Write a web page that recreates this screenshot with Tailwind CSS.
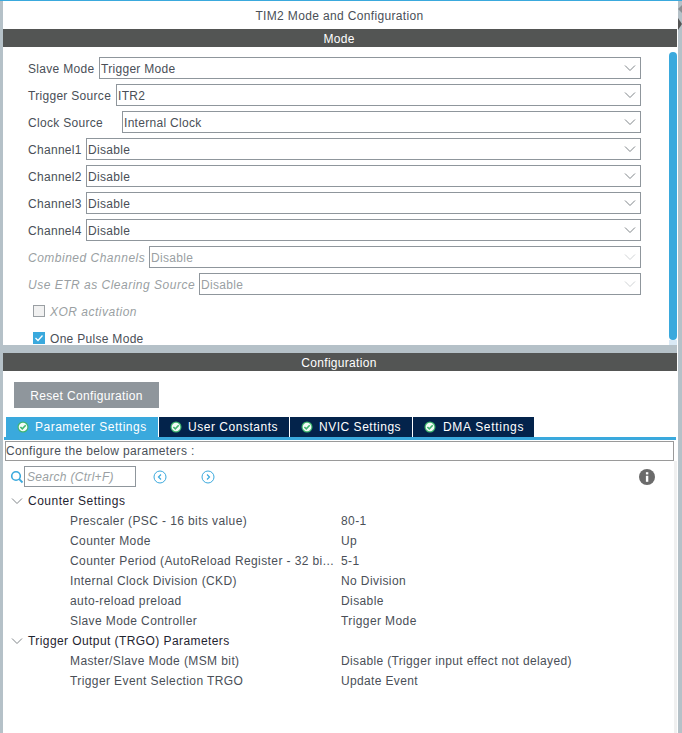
<!DOCTYPE html>
<html lang="en">
<head>
<meta charset="UTF-8">
<title>TIM2 Mode and Configuration</title>
<script src="https://cdn.jsdelivr.net/npm/@tailwindcss/browser@4"></script>
</head>
<body class="bg-white font-['Liberation_Sans',Arial,sans-serif] text-[12px] tracking-[0.3px] text-[#4a4f57] overflow-hidden">
<svg class="hidden">
  <symbol id="chev" viewBox="0 0 12 8"><path d="M1 1.5 6 6.5 11 1.5" fill="none" stroke="currentColor" stroke-width="1"/></symbol>
  <symbol id="ok" viewBox="0 0 12 12"><circle cx="6" cy="6" r="5.5" fill="#3fb56f"/><circle cx="6" cy="6" r="4.3" fill="#f2fbf6"/><path d="M3.4 6 5.3 7.9 8.7 4.3" fill="none" stroke="#3fb56f" stroke-width="1.6"/></symbol>
</svg>
<div class="h-[733px] w-[682px] flex border-t border-[#3aa9dd] pl-[3px] bg-[#b5c1c8]">

  <!-- main column -->
  <div class="w-[674px] flex flex-col">
    <div class="h-[28px] shrink-0 bg-white flex items-center justify-center pt-[2px] pr-[1px] tracking-[0.35px]">TIM2 Mode and Configuration</div>
    <div class="h-[18px] shrink-0 bg-[#535554] text-white flex items-center justify-center pt-[2px] pr-[2px]">Mode</div>

    <!-- Mode panel -->
    <div class="h-[298px] shrink-0 bg-white flex overflow-hidden">
      <div class="flex-1 pl-[25px] pt-[10px] flex flex-col gap-[5px]">
        <div class="flex items-center h-[22px] shrink-0">
          <span class="w-[71px] shrink-0 pt-[2px]">Slave Mode</span>
          <div class="h-[22px] w-[542px] border border-[#8f969c] flex items-center justify-between pl-[1px] pr-[3px]"><span class="pt-[2px]">Trigger Mode</span><svg class="w-[12px] h-[8px] mr-[1px] text-[#7f8589]"><use href="#chev"/></svg></div>
        </div>
        <div class="flex items-center h-[22px] shrink-0">
          <span class="w-[88px] shrink-0 pt-[2px]">Trigger Source</span>
          <div class="h-[22px] w-[525px] border border-[#8f969c] flex items-center justify-between pl-[1px] pr-[3px]"><span class="pt-[2px]">ITR2</span><svg class="w-[12px] h-[8px] mr-[1px] text-[#7f8589]"><use href="#chev"/></svg></div>
        </div>
        <div class="flex items-center h-[22px] shrink-0">
          <span class="w-[94px] shrink-0 pt-[2px]">Clock Source</span>
          <div class="h-[22px] w-[519px] border border-[#8f969c] flex items-center justify-between pl-[1px] pr-[3px]"><span class="pt-[2px]">Internal Clock</span><svg class="w-[12px] h-[8px] mr-[1px] text-[#7f8589]"><use href="#chev"/></svg></div>
        </div>
        <div class="flex items-center h-[22px] shrink-0">
          <span class="w-[58px] shrink-0 pt-[2px]">Channel1</span>
          <div class="h-[22px] w-[555px] border border-[#8f969c] flex items-center justify-between pl-[1px] pr-[3px]"><span class="pt-[2px]">Disable</span><svg class="w-[12px] h-[8px] mr-[1px] text-[#7f8589]"><use href="#chev"/></svg></div>
        </div>
        <div class="flex items-center h-[22px] shrink-0">
          <span class="w-[58px] shrink-0 pt-[2px]">Channel2</span>
          <div class="h-[22px] w-[555px] border border-[#8f969c] flex items-center justify-between pl-[1px] pr-[3px]"><span class="pt-[2px]">Disable</span><svg class="w-[12px] h-[8px] mr-[1px] text-[#7f8589]"><use href="#chev"/></svg></div>
        </div>
        <div class="flex items-center h-[22px] shrink-0">
          <span class="w-[58px] shrink-0 pt-[2px]">Channel3</span>
          <div class="h-[22px] w-[555px] border border-[#8f969c] flex items-center justify-between pl-[1px] pr-[3px]"><span class="pt-[2px]">Disable</span><svg class="w-[12px] h-[8px] mr-[1px] text-[#7f8589]"><use href="#chev"/></svg></div>
        </div>
        <div class="flex items-center h-[22px] shrink-0">
          <span class="w-[58px] shrink-0 pt-[2px]">Channel4</span>
          <div class="h-[22px] w-[555px] border border-[#8f969c] flex items-center justify-between pl-[1px] pr-[3px]"><span class="pt-[2px]">Disable</span><svg class="w-[12px] h-[8px] mr-[1px] text-[#7f8589]"><use href="#chev"/></svg></div>
        </div>
        <div class="flex items-center h-[22px] shrink-0 text-[#9a9fa3]">
          <span class="w-[121px] shrink-0 italic pt-[2px] tracking-[0.5px]">Combined Channels</span>
          <div class="h-[22px] w-[492px] border border-[#8f969c] flex items-center justify-between pl-[1px] pr-[3px]"><span class="pt-[2px]">Disable</span><svg class="w-[12px] h-[8px] mr-[1px] text-[#d0d3d5]"><use href="#chev"/></svg></div>
        </div>
        <div class="flex items-center h-[22px] shrink-0 text-[#9a9fa3]">
          <span class="w-[171px] shrink-0 italic pt-[2px] tracking-[0.5px]">Use ETR as Clearing Source</span>
          <div class="h-[22px] w-[442px] border border-[#8f969c] flex items-center justify-between pl-[1px] pr-[3px]"><span class="pt-[2px]">Disable</span><svg class="w-[12px] h-[8px] mr-[1px] text-[#d0d3d5]"><use href="#chev"/></svg></div>
        </div>
        <div class="flex items-center h-[22px] shrink-0 pl-[5px] gap-[5px] text-[#9a9fa3] italic tracking-[0.5px]">
          <span class="w-[12px] h-[12px] border border-[#9a9fa3] bg-[#f1f1f1]"></span><span class="pt-[2px]">XOR activation</span>
        </div>
        <div class="flex items-center h-[22px] shrink-0 pl-[5px] gap-[5px]">
          <span class="w-[12px] h-[12px] bg-[#3aa9dd] flex items-center justify-center"><svg class="w-[10px] h-[10px]" viewBox="0 0 10 10"><path d="M1.5 5 4 7.5 8.5 2.5" fill="none" stroke="white" stroke-width="1.3"/></svg></span><span class="pt-[2px] tracking-[0.3px]">One Pulse Mode</span>
        </div>
      </div>
      <div class="w-[8px] pt-[5px] bg-white flex flex-col">
        <div class="w-[8px] h-[288px] shrink-0 bg-[#3aa9dd] rounded-[4px]"></div>
        <div class="flex-1 bg-[#d9e9f5]"></div>
      </div>
    </div>

    <div class="h-[8px] shrink-0"></div>
    <div class="h-[18px] shrink-0 bg-[#535554] text-white flex items-center justify-center pt-[2px] pr-[2px]">Configuration</div>

    <!-- Configuration panel -->
    <div class="flex-1 bg-white flex flex-col pt-[11px]">
      <button class="ml-[11px] w-[145px] h-[26px] bg-[#8f969c] text-white tracking-[0.35px] pt-[1px]">Reset Configuration</button>

      <div class="mt-[9px] ml-[3px] flex gap-[1px] h-[20px] shrink-0 text-white">
        <div class="w-[152px] bg-[#3aa9dd] flex items-center pl-[11px] gap-[6px] tracking-[0.5px]"><svg class="w-[12px] h-[12px]"><use href="#ok"/></svg>Parameter Settings</div>
        <div class="w-[130px] bg-[#03234b] flex items-center pl-[11px] gap-[6px] tracking-[0.53px]"><svg class="w-[12px] h-[12px]"><use href="#ok"/></svg>User Constants</div>
        <div class="w-[122px] bg-[#03234b] flex items-center pl-[11px] gap-[6px] tracking-[0.52px]"><svg class="w-[12px] h-[12px]"><use href="#ok"/></svg>NVIC Settings</div>
        <div class="w-[121px] bg-[#03234b] flex items-center pl-[11px] gap-[7px] tracking-[0.7px]"><svg class="w-[12px] h-[12px]"><use href="#ok"/></svg>DMA Settings</div>
      </div>
      <div class="ml-[1px] mr-[1px] h-[3px] shrink-0 bg-[#3aa9dd]"></div>

      <div class="mt-[1px] ml-[2px] mr-[3px] h-[20px] shrink-0 border border-[#9a9a9a] flex items-center tracking-[0.35px]">Configure the below parameters :</div>

      <div class="flex-1 border-r-[3px] border-[#f0f0f0]">
        <div class="mt-[5px] ml-[7px] mr-[19px] h-[21px] flex items-center">
          <svg class="w-[14px] h-[14px] text-[#3aa9dd]" viewBox="0 0 14 14"><circle cx="6" cy="6" r="4.3" fill="none" stroke="currentColor" stroke-width="1.6"/><path d="M9.2 9.2 12.5 12.5" stroke="currentColor" stroke-width="1.8"/></svg>
          <div class="w-[112px] h-[21px] border border-[#8f969c] flex items-center pl-[2px] italic text-[#9a9fa3]">Search (Ctrl+F)</div>
          <svg class="ml-[17px] w-[14px] h-[14px] text-[#3aa9dd]" viewBox="0 0 14 14"><circle cx="7" cy="7" r="6" fill="none" stroke="currentColor" stroke-width="1"/><path d="M8 4.5 5.5 7 8 9.5" fill="none" stroke="currentColor" stroke-width="1.2"/></svg>
          <svg class="ml-[34px] w-[14px] h-[14px] text-[#3aa9dd]" viewBox="0 0 14 14"><circle cx="7" cy="7" r="6" fill="none" stroke="currentColor" stroke-width="1"/><path d="M6 4.5 8.5 7 6 9.5" fill="none" stroke="currentColor" stroke-width="1.2"/></svg>
          <svg class="ml-auto w-[16px] h-[16px]" viewBox="0 0 16 16"><circle cx="8" cy="8" r="8" fill="#6b6b6b"/><rect x="6.9" y="6.8" width="2.4" height="6" fill="white"/><rect x="6.9" y="3.2" width="2.4" height="2.2" fill="white"/></svg>
        </div>

        <div class="mt-[4px] flex flex-col tracking-[0.4px]">
          <div class="h-[20px] flex items-center pl-[8px] text-[#1f2430] tracking-[0.5px]"><svg class="w-[12px] h-[8px] mr-[5px] text-[#7f8589]"><use href="#chev"/></svg>Counter Settings</div>
          <div class="h-[20px] flex items-center pl-[67px]"><span class="w-[271px]">Prescaler (PSC - 16 bits value)</span><span>80-1</span></div>
          <div class="h-[20px] flex items-center pl-[67px]"><span class="w-[271px]">Counter Mode</span><span>Up</span></div>
          <div class="h-[20px] flex items-center pl-[67px]"><span class="w-[271px]">Counter Period (AutoReload Register - 32 bi...</span><span>5-1</span></div>
          <div class="h-[20px] flex items-center pl-[67px]"><span class="w-[271px]">Internal Clock Division (CKD)</span><span>No Division</span></div>
          <div class="h-[20px] flex items-center pl-[67px]"><span class="w-[271px]">auto-reload preload</span><span>Disable</span></div>
          <div class="h-[20px] flex items-center pl-[67px]"><span class="w-[271px]">Slave Mode Controller</span><span>Trigger Mode</span></div>
          <div class="h-[20px] flex items-center pl-[8px] text-[#1f2430] tracking-[0.42px]"><svg class="w-[12px] h-[8px] mr-[5px] text-[#7f8589]"><use href="#chev"/></svg>Trigger Output (TRGO) Parameters</div>
          <div class="h-[20px] flex items-center pl-[67px]"><span class="w-[271px]">Master/Slave Mode (MSM bit)</span><span class="tracking-[0.35px]">Disable (Trigger input effect not delayed)</span></div>
          <div class="h-[20px] flex items-center pl-[67px]"><span class="w-[271px]">Trigger Event Selection TRGO</span><span class="tracking-[0.35px]">Update Event</span></div>
        </div>
      </div>
    </div>
  </div>

  <!-- thin white gap and side strip with the collapse arrow -->
  <div class="w-[1px] bg-white"></div>
  <div class="w-[4px] pt-[3px]">
    <svg class="w-[4px] h-[28px]" viewBox="0 0 4 28"><path d="M4 1 0 5 4 9Z" fill="#8a8f93"/><path d="M0 14 4 20 0 26Z" fill="#555"/></svg>
  </div>
</div>
</body>
</html>
